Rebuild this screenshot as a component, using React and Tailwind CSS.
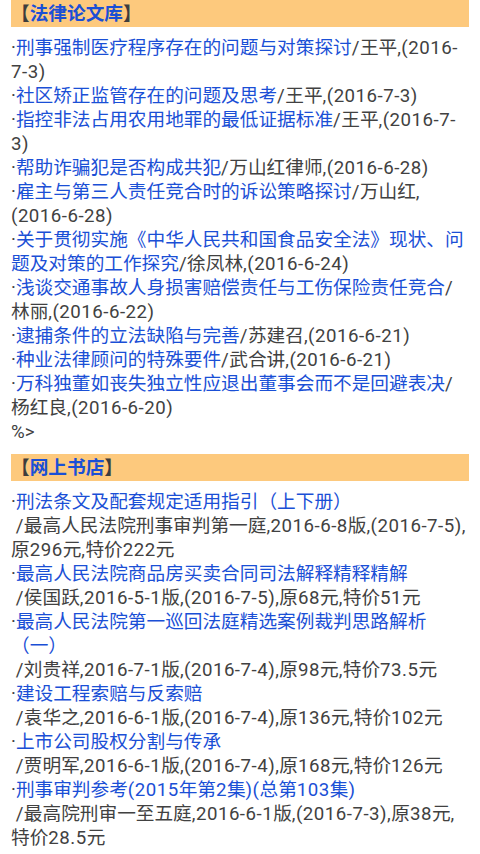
import React from "react";

const ASCII = /^[\x20-\x7e]+$/;

function R({ text }) {
  const parts = text.split(/([\x20-\x7e]+)/).filter((p) => p !== "");
  return parts.map((p, i) =>
    ASCII.test(p) ? (
      <span key={i} className="tracking-[0.5px]">
        {p}
      </span>
    ) : (
      <React.Fragment key={i}>{p}</React.Fragment>
    )
  );
}

const papers = [
  ["刑事强制医疗程序存在的问题与对策探讨", "/王平,(2016-\u200b7-3)"],
  ["社区矫正监管存在的问题及思考", "/王平,(2016-7-3)"],
  ["指控非法占用农用地罪的最低证据标准", "/王平,(2016-7-\u200b3)"],
  ["帮助诈骗犯是否构成共犯", "/万山红律师,(2016-6-28)"],
  ["雇主与第三人责任竞合时的诉讼策略探讨", "/万山红,(2016-6-28)"],
  ["关于贯彻实施《中华人民共和国食品安全法》现状、问题及对策的工作探究", "/徐凤林,(2016-6-24)"],
  ["浅谈交通事故人身损害赔偿责任与工伤保险责任竞合", "/林丽,(2016-6-22)"],
  ["逮捕条件的立法缺陷与完善", "/苏建召,(2016-6-21)"],
  ["种业法律顾问的特殊要件", "/武合讲,(2016-6-21)"],
  ["万科独董如丧失独立性应退出董事会而不是回避表决", "/杨红良,(2016-6-20)"],
];

const books = [
  ["刑法条文及配套规定适用指引（上下册）", "/最高人民法院刑事审判第一庭,2016-6-8版,(2016-7-5),原296元,特价222元"],
  ["最高人民法院商品房买卖合同司法解释精释精解", "/侯国跃,2016-5-1版,(2016-7-5),原68元,特价51元"],
  ["最高人民法院第一巡回法庭精选案例裁判思路解析（一）", "/刘贵祥,2016-7-1版,(2016-7-4),原98元,特价73.5元"],
  ["建设工程索赔与反索赔", "/袁华之,2016-6-1版,(2016-7-4),原136元,特价102元"],
  ["上市公司股权分割与传承", "/贾明军,2016-6-1版,(2016-7-4),原168元,特价126元"],
  ["刑事审判参考(2015年第2集)(总第103集)", "/最高院刑审一至五庭,2016-6-1版,(2016-7-3),原38元,特价28.5元"],
];

function Header({ title }) {
  return (
    <div className="h-[27px] bg-[#fdc97d] flex items-center font-bold">
      <span className="text-[#3d3d3d]">【</span>
      <span className="text-[#1a4fd6]">{title}</span>
      <span className="text-[#3d3d3d]">】</span>
    </div>
  );
}

export default function App() {
  return (
    <div
      className="bg-white px-[11px] text-[18.67px] leading-[24px] text-[#414141] min-h-[854px]"
      style={{ fontFamily: "Roboto, 'Noto Sans CJK SC', sans-serif" }}
    >
      <Header title="法律论文库" />
      <div className="mt-[9px]">
        {papers.map(([t, m], i) => (
          <div key={i}>
            ·<a className="text-[#1a4fd6]"><R text={t} /></a>
            <R text={m} />
          </div>
        ))}
        <div>%&gt;</div>
      </div>
      <div className="mt-[10px]">
        <Header title="网上书店" />
      </div>
      <div className="mt-[9px]">
        {books.map(([t, m], i) => (
          <div key={i}>
            ·<a className="text-[#1a4fd6]"><R text={t} /></a>
            <br />
            <R text={"\u00a0" + m} />
          </div>
        ))}
      </div>
    </div>
  );
}
